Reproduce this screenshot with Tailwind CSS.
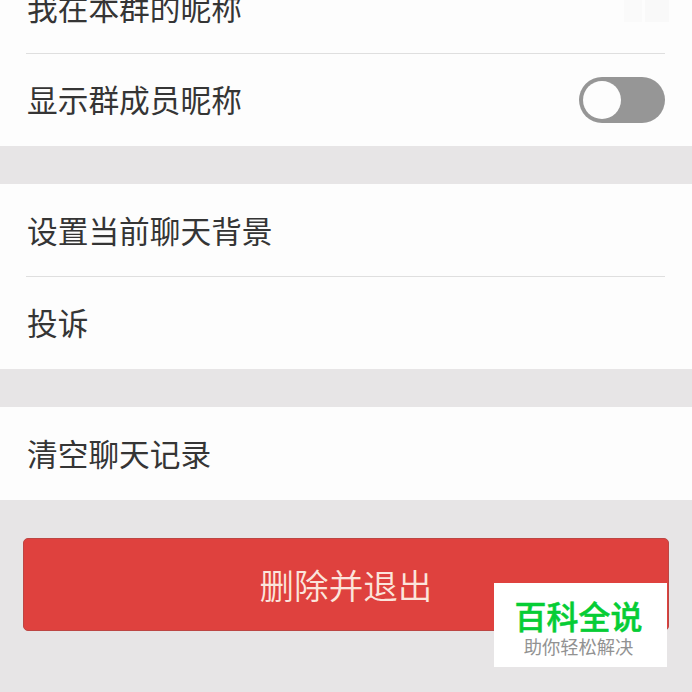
<!DOCTYPE html>
<html lang="zh-CN">
<head>
<meta charset="utf-8">
<title>群聊设置</title>
<script src="https://cdn.jsdelivr.net/npm/@tailwindcss/browser@4"></script>
</head>
<body class="bg-[#e7e5e6]">
<main class="relative flex h-[692px] w-[692px] flex-col overflow-hidden bg-[#e7e5e6] font-['Noto_Sans_CJK_SC',sans-serif] text-[30.7px] text-[#353535]">
  <section class="h-[146px] shrink-0 overflow-hidden bg-[#fdfdfd] pl-[26px] pr-[27px]">
    <div class="flex h-[54px] items-end justify-between border-b border-[#dfdfdf]">
      <span class="-mt-[39px] h-[92px] pl-px leading-[91px]">我在本群的昵称</span>
      <span class="-mr-1 mb-[31px] flex h-[22px] w-[45px] gap-[3px]"><i class="w-[18px] bg-[#fafafa]"></i><i class="w-6 bg-[#f9f9f9]"></i></span>
    </div>
    <div class="flex h-[92px] items-center justify-between pl-px">
      <span class="h-[92px] leading-[90px]">显示群成员昵称</span>
      <span class="flex h-[46px] w-[86px] items-center rounded-full bg-[#969696] pl-1"><i class="size-[38px] rounded-full bg-[#fdfdfd]"></i></span>
    </div>
  </section>
  <section class="mt-[38px] h-[185px] shrink-0 bg-[#fdfdfd] pl-[26px] pr-[27px]">
    <div class="h-[93px] border-b border-[#dfdfdf] pl-px leading-[92px]">设置当前聊天背景</div>
    <div class="h-[92px] pl-px leading-[90px]">投诉</div>
  </section>
  <section class="mt-[38px] h-[93px] shrink-0 bg-[#fdfdfd] pl-[27px] leading-[92px]">清空聊天记录</section>
  <button class="mx-[23px] mt-[38px] h-[93px] shrink-0 rounded-[5px] border border-[#bd4643] bg-[#df413e] text-[34.6px] font-[350] leading-[91px] text-[#fbe5dc]">删除并退出</button>
  <aside class="absolute left-[494px] top-[583px] flex h-[84px] w-[173px] flex-col items-center bg-white pr-1">
    <strong class="mt-3 h-10 text-[32px] font-medium leading-10 text-[#06cd35] [-webkit-text-stroke:0.5px_#06cd35]">百科全说</strong>
    <span class="text-[18.3px] leading-[22px] text-[#929292]">助你轻松解决</span>
  </aside>
</main>
</body>
</html>
